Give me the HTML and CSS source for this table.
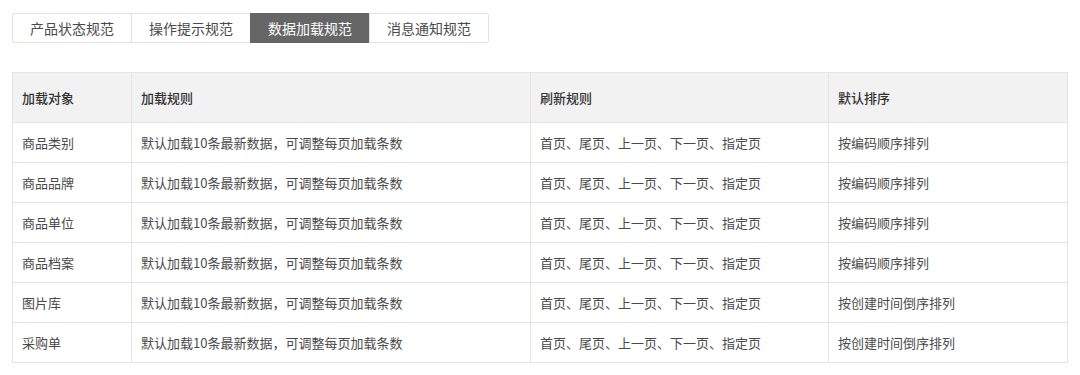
FILE: index.html
```html
<!DOCTYPE html>
<html lang="zh-CN">
<head>
<meta charset="utf-8">
<title>数据加载规范</title>
<link rel="stylesheet" href="styles.css">
</head>
<body>
<div class="page">
  <div class="tabs">
    <div class="tab">产品状态规范</div>
    <div class="tab">操作提示规范</div>
    <div class="tab active">数据加载规范</div>
    <div class="tab">消息通知规范</div>
  </div>
  <table class="grid">
    <colgroup>
      <col class="c1"><col class="c2"><col class="c3"><col class="c4">
    </colgroup>
    <thead>
      <tr><th>加载对象</th><th>加载规则</th><th>刷新规则</th><th>默认排序</th></tr>
    </thead>
    <tbody>
      <tr><td>商品类别</td><td>默认加载10条最新数据，可调整每页加载条数</td><td>首页、尾页、上一页、下一页、指定页</td><td>按编码顺序排列</td></tr>
      <tr><td>商品品牌</td><td>默认加载10条最新数据，可调整每页加载条数</td><td>首页、尾页、上一页、下一页、指定页</td><td>按编码顺序排列</td></tr>
      <tr><td>商品单位</td><td>默认加载10条最新数据，可调整每页加载条数</td><td>首页、尾页、上一页、下一页、指定页</td><td>按编码顺序排列</td></tr>
      <tr><td>商品档案</td><td>默认加载10条最新数据，可调整每页加载条数</td><td>首页、尾页、上一页、下一页、指定页</td><td>按编码顺序排列</td></tr>
      <tr><td>图片库</td><td>默认加载10条最新数据，可调整每页加载条数</td><td>首页、尾页、上一页、下一页、指定页</td><td>按创建时间倒序排列</td></tr>
      <tr><td>采购单</td><td>默认加载10条最新数据，可调整每页加载条数</td><td>首页、尾页、上一页、下一页、指定页</td><td>按创建时间倒序排列</td></tr>
    </tbody>
  </table>
</div>
</body>
</html>
```

FILE: styles.css
```css
html, body {
  margin: 0;
  padding: 0;
  background: #fff;
}
body {
  font-family: "Noto Sans CJK SC", "Noto Sans", sans-serif;
  color: #4a4a4a;
}
.page {
  padding: 13px 0 0 12px;
}
.tabs {
  display: flex;
  width: max-content;
  border: 1px solid #e2e2e2;
  border-radius: 2px;
}
.tab {
  width: 118px;
  height: 28px;
  line-height: 28px;
  text-align: center;
  font-size: 14px;
  color: #4a4a4a;
  border-left: 1px solid #e2e2e2;
}
.tab:first-child {
  border-left: none;
}
.tab.active {
  background: #666;
  color: #fff;
  border-left-color: #666;
  margin: -1px 0;
  padding: 1px 0;
}
.grid {
  margin-top: 29px;
  border-collapse: collapse;
  table-layout: fixed;
  width: 1055px;
  font-size: 13px;
}
.c1 { width: 119px; }
.c2 { width: 399px; }
.c3 { width: 298px; }
.c4 { width: 239px; }
.grid th, .grid td {
  border: 1px solid #e4e4e4;
  text-align: left;
  padding: 0 9px;
  white-space: nowrap;
}
.grid th {
  background: #f2f2f2;
  height: 49px;
  font-weight: 500;
  color: #333;
}
.grid td {
  height: 39px;
  color: #4a4a4a;
}
```
